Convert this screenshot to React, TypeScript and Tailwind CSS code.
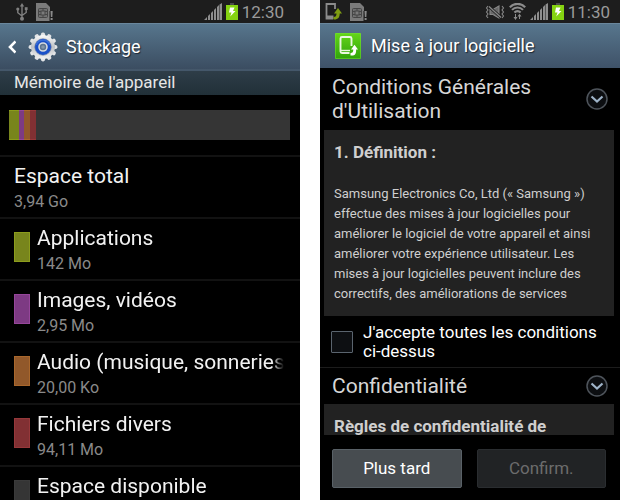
import React, { useState } from 'react';

interface StorageItem {
    label: string;
    size?: string;
    color: string;
}

const storageItems: StorageItem[] = [
    { label: 'Applications', size: '142 Mo', color: 'bg-[#78851c] border-[#8c9c1c]' },
    { label: 'Images, vidéos', size: '2,95 Mo', color: 'bg-[#7d3a83] border-[#96469a]' },
    { label: 'Audio (musique, sonneries', size: '20,00 Ko', color: 'bg-[#91582a] border-[#a9672c]' },
    { label: 'Fichiers divers', size: '94,11 Mo', color: 'bg-[#813033] border-[#96383a]' },
    { label: 'Espace disponible', color: 'bg-[#353535] border-[#3a3a3a]' },
];

const UsbIcon: React.FC = () => (
    <svg className="h-[18px] w-3" viewBox="0 0 12 18" fill="none" stroke="#808080" strokeWidth="1.4" aria-hidden="true">
        <path d="M6 3v13M1.8 6.5v3.2L6 13M10.2 6v3.500L6 12.500" />
        <path d="M6 0l2.200 3.600H3.800z" fill="#808080" stroke="none" />
        <circle cx="1.8" cy="6" r="1.6" fill="#808080" stroke="none" />
        <path d="M8.8 4.2h2.8V7H8.8z" fill="#808080" stroke="none" />
        <circle cx="6" cy="15.800" r="2" fill="#808080" stroke="none" />
    </svg>
);

const SimAlertIcon: React.FC = () => (
    <svg className="h-[18px] w-[17px]" viewBox="0 0 17 18" aria-hidden="true">
        <path d="M0 0h10l4 4v4h-.5v10H0z" fill="#7b7b7b" />
        <rect x="2.500" y="5.500" width="9" height="9" rx="1" fill="#717171" stroke="#464646" />
        <path d="M2.500 8.500H5M2.500 11.500H5M9 8.500h2.500M9 11.500h2.500M7 5.500V8M7 12v2.500" stroke="#464646" />
        <rect x="5" y="8" width="4" height="4" fill="#7b7b7b" stroke="#464646" />
        <path d="M14.500 8h2.200l-.4 6h-1.400z" fill="#8b8b8b" />
        <rect x="14.600" y="15" width="2" height="2" fill="#8b8b8b" />
    </svg>
);

const SignalIcon: React.FC = () => (
    <svg className="h-[17px] w-[18px]" viewBox="0 0 18 17" fill="#8e8e8e" aria-hidden="true">
        <path d="M0 17l3-3v3zM4 13l2-2v6H4zM7 10l2-2v9H7zM10 7l2-2v12h-2zM13 4l2-2v15h-2zM15.500 1.500L18 0v17h-2.500z" />
    </svg>
);

const BatteryIcon: React.FC = () => (
    <svg className="h-[17px] w-3" viewBox="0 0 12 17" aria-hidden="true">
        <path d="M4 0h4v2H4z" fill="#4b4b4b" />
        <path d="M0 2h12v15H0z" fill="#85d311" />
        <path d="M4 4.500h4.500L7 8h2.500L4.200 13.500 5.500 9.500H3z" fill="#fff" />
    </svg>
);

const VibrateIcon: React.FC = () => (
    <svg className="h-[14px] w-5" viewBox="0 0 20 14" fill="none" stroke="#888" strokeWidth="1.1" aria-hidden="true">
        <path d="M3 1l-1.500 2L3 5 1.500 7 3 9l-1.500 2L3 13M17 1l1.500 2L17 5l1.500 2L17 9l1.500 2-1.500 2" />
        <path d="M5 4.500h3L14 1v12L8 9.500H5z" fill="#696969" />
        <path d="M4 1.500l12 11" stroke="#1d1d1d" strokeWidth="3" />
        <path d="M4 1.500l12 11" strokeWidth="1.400" />
    </svg>
);

const WifiIcon: React.FC = () => (
    <svg className="h-[17px] w-[17px]" viewBox="0 0 17 17" fill="none" stroke="#8c8c8c" strokeWidth="2.100" aria-hidden="true">
        <path d="M.8 4.200C5-.3 12-.3 16.200 4.200M3 6.900c3-3.200 8-3.200 11 0M5.400 9.500c1.800-1.800 4.400-1.800 6.200 0" />
        <path d="M6.500 11v4M10.500 16v-4" strokeWidth="1" />
        <path d="M4.500 14h4l-2 3zM8.500 13.500h4l-2-2.800z" fill="#8c8c8c" stroke="none" />
    </svg>
);

const DeviceUpdateIcon: React.FC = () => (
    <svg className="h-[17px] w-[17px]" viewBox="0 0 17 17" fill="none" aria-hidden="true">
        <path d="M8 15.500H1.500V1H10v5" stroke="#8b8b8b" strokeWidth="1.800" />
        <path d="M1 12.500h7.500V16H1z" fill="#8b8b8b" />
        <path d="M8.500 16.500c4.500.3 6.200-2 6.200-6H17L13 5l-4 5.500h2.500c0 2.500-.8 3.500-3 3.500z" fill="#7f9d12" />
    </svg>
);

const GearIcon: React.FC = () => (
    <svg className="h-[30px] w-[30px]" viewBox="0 0 30 30" aria-hidden="true">
        <defs>
            <linearGradient id="gear" x1="0" y1="0" x2="0" y2="1">
                <stop offset="0" stopColor="#fafafa" />
                <stop offset=".5" stopColor="#bfc2c6" />
                <stop offset="1" stopColor="#f2f2f2" />
            </linearGradient>
        </defs>
        {[0, 30, 60, 90, 120, 150].map((angle) => (
            <rect key={angle} x="12.900" y=".6" width="4.200" height="28.800" rx="1.800" fill="#e2e4e6" transform={`rotate(${angle} 15 15)`} />
        ))}
        <circle cx="15" cy="15" r="12" fill="url(#gear)" />
        <circle cx="15" cy="15" r="8.300" fill="#1a50c8" stroke="#7d8ba3" strokeWidth=".6" />
        <path d="M8.300 13a7 7 0 0 1 13.400 0" stroke="#3a70dc" strokeWidth="1.200" fill="none" />
        <circle cx="15" cy="15" r="4" fill="#5d7590" stroke="#d5dae0" strokeWidth="1.600" />
        <circle cx="15" cy="15" r="1.800" fill="#8497aa" />
    </svg>
);

const UpdateAppIcon: React.FC = () => (
    <svg className="h-[26px] w-[26px]" viewBox="0 0 26 26" aria-hidden="true">
        <defs>
            <linearGradient id="update" x1="0" y1="0" x2="0" y2="1">
                <stop offset="0" stopColor="#66d619" />
                <stop offset="1" stopColor="#2fa30a" />
            </linearGradient>
        </defs>
        <rect width="26" height="26" rx="1" fill="url(#update)" />
        <path d="M.5.5h25v25H.5z" fill="none" stroke="#74df35" strokeOpacity=".5" />
        <path d="M14.500 20H7q-1.500 0-1.500-1.500v-13Q5.500 4 7 4h8q1.500 0 1.500 1.500V13" fill="none" stroke="#e9f7e0" strokeWidth="1.900" />
        <path d="M6 17.500h9" stroke="#e9f7e0" strokeWidth="1.400" />
        <path d="M15.500 22.500c4.800.4 5.800-1.800 5.600-6H23l-3.500-4.800-3.500 4.800h2.300c0 2.500-.6 3.500-2.800 3.600z" fill="#fff" />
    </svg>
);

const ChevronCircle: React.FC = () => (
    <svg className="h-[22px] w-[22px]" viewBox="0 0 22 22" fill="none" aria-hidden="true">
        <circle cx="11" cy="11" r="10" fill="#0c0e11" stroke="#4e545b" strokeWidth="1.500" />
        <path d="M5.500 8.500L11 13.500l5.500-5" stroke="#9fb4c9" strokeWidth="2.200" />
    </svg>
);

const SectionHeader: React.FC<{ title: string; className: string }> = ({ title, className }) => (
    <div className={`flex items-center justify-between pl-3 pr-3 ${className}`}>
        <h2 className="max-w-56 text-[21px] leading-6 text-[#d6d6d6]">{title}</h2>
        <button type="button" aria-label={title}>
            <ChevronCircle />
        </button>
    </div>
);

const StorageScreen: React.FC = () => (
    <section className="h-full min-w-0 flex-1 overflow-hidden bg-black">
        <div className="flex h-[23px] items-center bg-[#1d1d1d] px-4 text-[#9a9a9a]">
            <div className="flex flex-1 items-center gap-2">
                <UsbIcon />
                <SimAlertIcon />
            </div>
            <div className="flex items-center gap-1">
                <SignalIcon />
                <BatteryIcon />
                <span className="text-[17px] leading-5">12:30</span>
            </div>
        </div>
        <header className="flex h-[46px] items-center border-t border-[#6a879c] bg-linear-to-b from-[#57768d] to-[#3b4d61] pl-2">
            <button type="button" aria-label="Retour" className="mr-3">
                <svg className="h-3.5 w-2" viewBox="0 0 8 14" fill="none" stroke="#fff" strokeWidth="2.600" aria-hidden="true">
                    <path d="M7.500 1.500L2 7l5.500 5.500" />
                </svg>
            </button>
            <GearIcon />
            <h1 className="ml-2 text-lg text-white [text-shadow:1px_1px_1px_#1d2733]">Stockage</h1>
        </header>
        <h2 className="h-[26px] border-t-2 border-[#44576a] bg-linear-to-b from-[#2e3d48] to-[#213038] pl-3.5 text-[17px] leading-[22px] text-[#e6e6e6]">
            Mémoire de l'appareil
        </h2>
        <div className="py-[15px] pl-[9px] pr-2.5">
            <div className="flex h-[30px] bg-[#353535]">
                <div className="w-2.5 border-y border-[#8c9c1c] bg-[#78851c]" />
                <div className="w-[5px] border-y border-[#96469a] bg-[#7d3a83]" />
                <div className="w-1.5 border-y border-[#a9672c] bg-[#91582a]" />
                <div className="w-1.5 border-y border-[#96383a] bg-[#813033]" />
            </div>
        </div>
        <ul>
            <li className="h-[62px] border-t-2 border-[#121212] pl-3.5 pt-[5px]">
                <p className="text-[21px] leading-7 text-[#f2f2f2]">Espace total</p>
                <p className="text-base leading-6 text-[#8a8a8a]">3,94 Go</p>
            </li>
            {storageItems.map((item) => (
                <li key={item.label} className="flex h-[62px] gap-[7px] border-t-2 border-[#121212] pl-3.5 pr-4 pt-[5px]">
                    <span className={`mt-2 h-[30px] w-4 shrink-0 border ${item.color}`} />
                    <div className="min-w-0 flex-1">
                        <p className="whitespace-nowrap text-[21px] leading-7 text-[#f2f2f2] mask-r-from-95%">{item.label}</p>
                        {item.size && <p className="text-base leading-6 text-[#8a8a8a]">{item.size}</p>}
                    </div>
                </li>
            ))}
        </ul>
    </section>
);

const UpdateScreen: React.FC = () => {
    const [accepted, setAccepted] = useState(false);

    return (
        <section className="flex h-full min-w-0 flex-1 flex-col bg-black">
            <div className="flex h-[23px] shrink-0 items-center bg-[#1d1d1d] pl-[5px] pr-2.5 text-[#9a9a9a]">
                <div className="flex flex-1 items-center gap-2">
                    <DeviceUpdateIcon />
                    <SimAlertIcon />
                </div>
                <div className="flex items-center gap-1">
                    <VibrateIcon />
                    <WifiIcon />
                    <SignalIcon />
                    <BatteryIcon />
                    <span className="text-[17px] leading-5">11:30</span>
                </div>
            </div>
            <header className="flex h-[45px] shrink-0 items-center gap-2.5 border-t border-[#6a879c] bg-linear-to-b from-[#57768d] to-[#3f5268] pl-[15px]">
                <UpdateAppIcon />
                <h1 className="text-lg text-white [text-shadow:1px_1px_1px_#1d2733]">Mise à jour logicielle</h1>
            </header>
            <main className="min-h-0 flex-1 overflow-hidden">
                <SectionHeader title="Conditions Générales d'Utilisation" className="h-[62px]" />
                <div className="ml-1 mr-1.5 h-[186px] overflow-hidden bg-[#222] px-2.5 pt-3 text-[#cfcfcf]">
                    <h3 className="text-[17px] font-bold leading-5">1. Définition :</h3>
                    <p className="mt-[22px] text-[13px] leading-5">
                        Samsung Electronics Co, Ltd (« Samsung ») effectue des mises à jour logicielles pour améliorer le
                        logiciel de votre appareil et ainsi améliorer votre expérience utilisateur. Les mises à jour
                        logicielles peuvent inclure des correctifs, des améliorations de services
                    </p>
                </div>
                <label className="flex h-[52px] items-center gap-2.5 border-b border-[#1c1c1c] pl-[11px] pr-4 text-[17px] leading-[19px] text-white">
                    <input
                        type="checkbox"
                        checked={accepted}
                        onChange={(e) => setAccepted(e.target.checked)}
                        className="size-[22px] shrink-0 appearance-none rounded-[1px] border border-[#5a646e] bg-[#0d0f12] checked:bg-[#57768d]"
                    />
                    <span>
                        J'accepte toutes les conditions <span className="whitespace-nowrap">ci-dessus</span>
                    </span>
                </label>
                <SectionHeader title="Confidentialité" className="h-9" />
                <div className="ml-1 mr-1.5 bg-[#222] px-2.5 pt-3 text-[#cfcfcf]">
                    <h3 className="text-[17px] font-bold leading-5">Règles de confidentialité de</h3>
                </div>
            </main>
            <footer className="flex shrink-0 gap-[15px] pb-3 pl-3 pr-3.5 pt-3.5">
                <button type="button" className="h-[39px] flex-1 rounded-[2px] border border-[#596167] bg-[#474c50] text-[17px] text-white">
                    Plus tard
                </button>
                <button type="button" disabled={!accepted} className="h-[39px] flex-1 rounded-[2px] border border-[#2a2d30] bg-[#212325] text-[17px] text-white disabled:text-[#6c6c6c]">
                    Confirm.
                </button>
            </footer>
        </section>
    );
};

const App: React.FC = () => (
    <div className="flex h-screen gap-5 overflow-hidden bg-white font-['Roboto',sans-serif]">
        <StorageScreen />
        <UpdateScreen />
    </div>
);

export default App;
